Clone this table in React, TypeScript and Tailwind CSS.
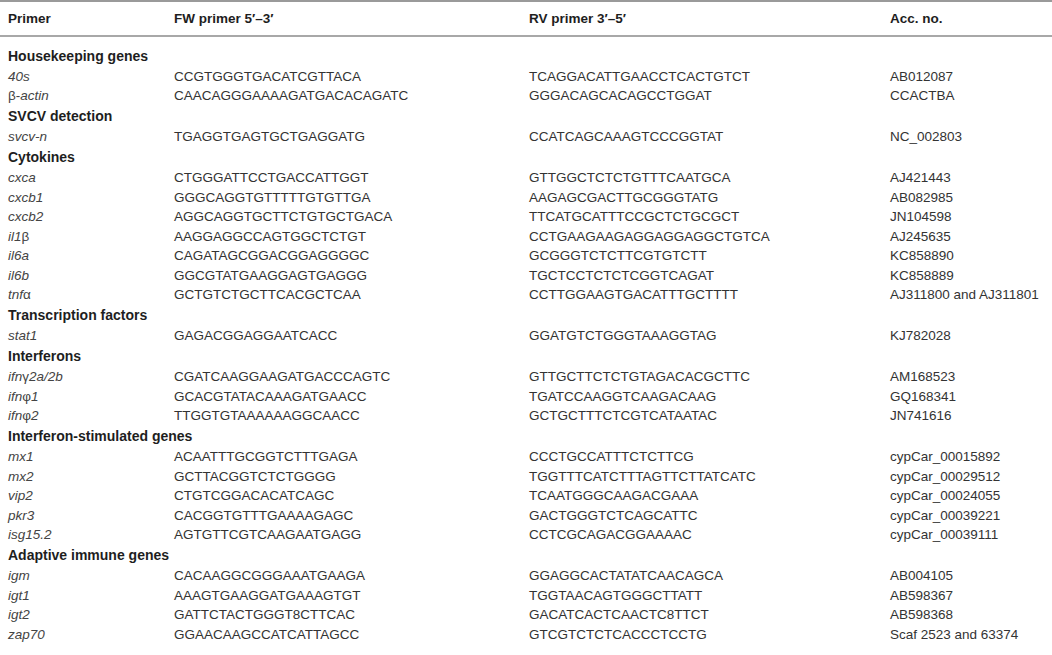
import React from "react";

type Row = { gene: React.ReactNode; fw: string; rv: string; acc: string };
type Group = { title: string; rows: Row[] };

const groups: Group[] = [
  {
    title: "Housekeeping genes",
    rows: [
      { gene: <i>40s</i>, fw: "CCGTGGGTGACATCGTTACA", rv: "TCAGGACATTGAACCTCACTGTCT", acc: "AB012087" },
      { gene: <>β-<i>actin</i></>, fw: "CAACAGGGAAAAGATGACACAGATC", rv: "GGGACAGCACAGCCTGGAT", acc: "CCACTBA" },
    ],
  },
  {
    title: "SVCV detection",
    rows: [{ gene: <i>svcv-n</i>, fw: "TGAGGTGAGTGCTGAGGATG", rv: "CCATCAGCAAAGTCCCGGTAT", acc: "NC_002803" }],
  },
  {
    title: "Cytokines",
    rows: [
      { gene: <i>cxca</i>, fw: "CTGGGATTCCTGACCATTGGT", rv: "GTTGGCTCTCTGTTTCAATGCA", acc: "AJ421443" },
      { gene: <i>cxcb1</i>, fw: "GGGCAGGTGTTTTTGTGTTGA", rv: "AAGAGCGACTTGCGGGTATG", acc: "AB082985" },
      { gene: <i>cxcb2</i>, fw: "AGGCAGGTGCTTCTGTGCTGACA", rv: "TTCATGCATTTCCGCTCTGCGCT", acc: "JN104598" },
      { gene: <><i>il1</i>β</>, fw: "AAGGAGGCCAGTGGCTCTGT", rv: "CCTGAAGAAGAGGAGGAGGCTGTCA", acc: "AJ245635" },
      { gene: <i>il6a</i>, fw: "CAGATAGCGGACGGAGGGGC", rv: "GCGGGTCTCTTCGTGTCTT", acc: "KC858890" },
      { gene: <i>il6b</i>, fw: "GGCGTATGAAGGAGTGAGGG", rv: "TGCTCCTCTCTCGGTCAGAT", acc: "KC858889" },
      { gene: <><i>tnf</i>α</>, fw: "GCTGTCTGCTTCACGCTCAA", rv: "CCTTGGAAGTGACATTTGCTTTT", acc: "AJ311800 and AJ311801" },
    ],
  },
  {
    title: "Transcription factors",
    rows: [{ gene: <i>stat1</i>, fw: "GAGACGGAGGAATCACC", rv: "GGATGTCTGGGTAAAGGTAG", acc: "KJ782028" }],
  },
  {
    title: "Interferons",
    rows: [
      { gene: <><i>ifn</i>γ<i>2a/2b</i></>, fw: "CGATCAAGGAAGATGACCCAGTC", rv: "GTTGCTTCTCTGTAGACACGCTTC", acc: "AM168523" },
      { gene: <><i>ifn</i>φ<i>1</i></>, fw: "GCACGTATACAAAGATGAACC", rv: "TGATCCAAGGTCAAGACAAG", acc: "GQ168341" },
      { gene: <><i>ifn</i>φ<i>2</i></>, fw: "TTGGTGTAAAAAAGGCAACC", rv: "GCTGCTTTCTCGTCATAATAC", acc: "JN741616" },
    ],
  },
  {
    title: "Interferon-stimulated genes",
    rows: [
      { gene: <i>mx1</i>, fw: "ACAATTTGCGGTCTTTGAGA", rv: "CCCTGCCATTTCTCTTCG", acc: "cypCar_00015892" },
      { gene: <i>mx2</i>, fw: "GCTTACGGTCTCTGGGG", rv: "TGGTTTCATCTTTAGTTCTTATCATC", acc: "cypCar_00029512" },
      { gene: <i>vip2</i>, fw: "CTGTCGGACACATCAGC", rv: "TCAATGGGCAAGACGAAA", acc: "cypCar_00024055" },
      { gene: <i>pkr3</i>, fw: "CACGGTGTTTGAAAAGAGC", rv: "GACTGGGTCTCAGCATTC", acc: "cypCar_00039221" },
      { gene: <i>isg15.2</i>, fw: "AGTGTTCGTCAAGAATGAGG", rv: "CCTCGCAGACGGAAAAC", acc: "cypCar_00039111" },
    ],
  },
  {
    title: "Adaptive immune genes",
    rows: [
      { gene: <i>igm</i>, fw: "CACAAGGCGGGAAATGAAGA", rv: "GGAGGCACTATATCAACAGCA", acc: "AB004105" },
      { gene: <i>igt1</i>, fw: "AAAGTGAAGGATGAAAGTGT", rv: "TGGTAACAGTGGGCTTATT", acc: "AB598367" },
      { gene: <i>igt2</i>, fw: "GATTCTACTGGGT8CTTCAC", rv: "GACATCACTCAACTC8TTCT", acc: "AB598368" },
      { gene: <i>zap70</i>, fw: "GGAACAAGCCATCATTAGCC", rv: "GTCGTCTCTCACCCTCCTG", acc: "Scaf 2523 and 63374" },
    ],
  },
];

const cols = "grid grid-cols-[166px_355px_361px_1fr] pl-2";

export default function App() {
  return (
    <div className="w-[1052px] h-[655px] bg-white text-[#333] text-[13.5px] leading-none font-['Liberation_Sans',Arial,sans-serif] overflow-hidden">
      {/* Table header */}
      <div className="border-t-2 border-[#9a9a9a]">
        <div className={`${cols} h-[35px] items-center font-bold text-[#1e1e1e] border-b-2 border-[#a8a8a8]`}>
          <div>Primer</div>
          <div>FW primer 5′–3′</div>
          <div>RV primer 3′–5′</div>
          <div>Acc. no.</div>
        </div>
      </div>

      {/* Body */}
      <div className="pt-[8px]">
        {groups.map((g) => (
          <div key={g.title}>
            <div className="h-[21.5px] flex items-center pl-2 font-bold text-[#1e1e1e] text-[14px]">
              {g.title}
            </div>
            {g.rows.map((r, i) => (
              <div key={i} className={`${cols} h-[19.5px] items-center`}>
                <div className="text-[#444]">{r.gene}</div>
                <div>{r.fw}</div>
                <div>{r.rv}</div>
                <div>{r.acc}</div>
              </div>
            ))}
          </div>
        ))}
      </div>
    </div>
  );
}
